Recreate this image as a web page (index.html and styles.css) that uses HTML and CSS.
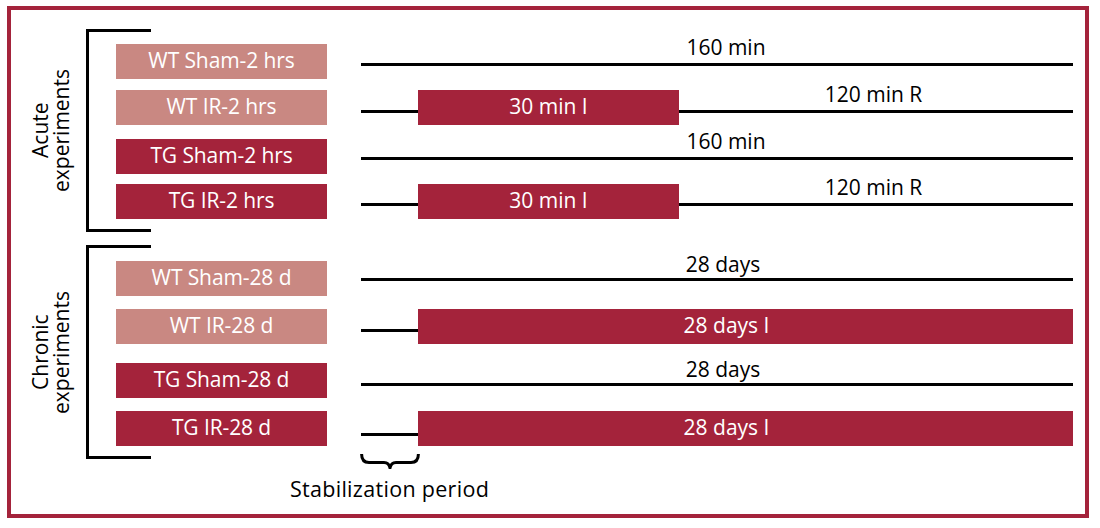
FILE: index.html
```html
<!DOCTYPE html>
<html lang="en">
<head>
<meta charset="utf-8">
<title>Experimental protocol</title>
<link rel="stylesheet" href="styles.css">
</head>
<body>
<div class="frame">
  <section class="group acute">
    <div class="side"><span class="side-text">Acute<br>experiments</span></div>
    <div class="bracket">
      <div class="tick"></div>
      <div class="row">
        <div class="label light">WT Sham-2 hrs</div>
        <div class="track">
          <div class="seg full pad-160"><span>160 min</span></div>
        </div>
      </div>
      <div class="row">
        <div class="label light">WT IR-2 hrs</div>
        <div class="track">
          <div class="seg stab"></div>
          <div class="block short">30 min I</div>
          <div class="seg rest pad-120"><span>120 min R</span></div>
        </div>
      </div>
      <div class="row">
        <div class="label dark">TG Sham-2 hrs</div>
        <div class="track">
          <div class="seg full pad-160"><span>160 min</span></div>
        </div>
      </div>
      <div class="row">
        <div class="label dark">TG IR-2 hrs</div>
        <div class="track">
          <div class="seg stab"></div>
          <div class="block short">30 min I</div>
          <div class="seg rest pad-120"><span>120 min R</span></div>
        </div>
      </div>
      <div class="tick"></div>
    </div>
  </section>

  <section class="group chronic">
    <div class="side"><span class="side-text">Chronic<br>experiments</span></div>
    <div class="bracket">
      <div class="tick"></div>
      <div class="row">
        <div class="label light">WT Sham-28 d</div>
        <div class="track">
          <div class="seg full pad-28"><span>28 days</span></div>
        </div>
      </div>
      <div class="row">
        <div class="label light">WT IR-28 d</div>
        <div class="track">
          <div class="seg stab"></div>
          <div class="block long">28 days I</div>
        </div>
      </div>
      <div class="row">
        <div class="label dark">TG Sham-28 d</div>
        <div class="track">
          <div class="seg full pad-28"><span>28 days</span></div>
        </div>
      </div>
      <div class="row">
        <div class="label dark">TG IR-28 d</div>
        <div class="track">
          <div class="seg stab"></div>
          <div class="block long">28 days I</div>
        </div>
      </div>
      <div class="tick"></div>
    </div>
  </section>

  <div class="footer">
    <div class="stab-note">
      <svg class="brace" viewBox="0 0 60 15" width="60" height="15" aria-hidden="true">
        <path d="M1.6 0 Q1.6 8.5 9 8.5 L24 8.5 Q29 8.5 30 14 Q31 8.5 36 8.5 L51 8.5 Q58.4 8.5 58.4 0" fill="none" stroke="#000" stroke-width="3" stroke-linejoin="round"/>
      </svg>
      <span class="stab-text">Stabilization period</span>
    </div>
  </div>
</div>
</body>
</html>
```

FILE: styles.css
```css
* { box-sizing: border-box; }

html, body {
  margin: 0;
  padding: 0;
  background: #ffffff;
}

body {
  font-family: "Open Sans", "Noto Sans", "Liberation Sans", sans-serif;
  font-size: 21px;
  color: #000;
}

.frame {
  width: 1082px;
  height: 512px;
  margin: 6px 0 0 7px;
  border: 4px solid #a4233b;
  display: flex;
  flex-direction: column;
}

.group {
  display: flex;
}

.acute { margin-top: 19px; }
.chronic { margin-top: 13px; }

.side {
  width: 75px;
  padding-left: 4px;
  display: flex;
  align-items: center;
  justify-content: center;
}

.side-text {
  writing-mode: vertical-rl;
  transform: rotate(180deg);
  text-align: center;
  font-size: 21px;
  line-height: 21px;
  white-space: nowrap;
}

.bracket {
  border-left: 3px solid #000;
  display: flex;
  flex-direction: column;
}

.tick {
  width: 62px;
  height: 3px;
  background: #000;
}

.row {
  display: flex;
  height: 35px;
  padding-left: 27px;
}

/* vertical rhythm of the rows (from the reference) */
.acute .row:nth-child(2) { margin-top: 12px; --ly: 19px; }
.acute .row:nth-child(3) { margin-top: 11px; --ly: 20px; }
.acute .row:nth-child(4) { margin-top: 14px; --ly: 18px; }
.acute .row:nth-child(5) { margin-top: 10px; --ly: 19px; }
.acute .tick:last-child { margin-top: 10px; }

.chronic .row:nth-child(2) { margin-top: 13px; --ly: 17px; }
.chronic .row:nth-child(3) { margin-top: 13px; --ly: 20px; }
.chronic .row:nth-child(4) { margin-top: 19px; --ly: 20px; }
.chronic .row:nth-child(5) { margin-top: 13px; --ly: 22px; }
.chronic .tick:last-child { margin-top: 10px; }

.label {
  width: 211px;
  height: 35px;
  display: flex;
  align-items: center;
  justify-content: center;
  padding-bottom: 3px;
  color: #ffffff;
  letter-spacing: -0.1px;
  white-space: nowrap;
}

.light { background: #c98882; }
.dark { background: #a4233b; }

.track {
  display: flex;
  align-items: flex-start;
  width: 712px;
  height: 35px;
  margin-left: 34px;
}

.seg {
  flex: none;
  height: calc(var(--ly) + 3px);
  border-bottom: 3px solid #000;
  display: flex;
  flex-direction: column;
  justify-content: flex-end;
  align-items: center;
}

.seg span {
  line-height: 20px;
  white-space: nowrap;
  padding-bottom: 6px;
}

.chronic .seg span { padding-bottom: 4px; }

.full { width: 712px; }
.stab { width: 57px; }
.rest { width: 394px; }

.pad-160 { padding-left: 18px; }
.pad-120 { padding-right: 5px; }
.pad-28 { padding-left: 12px; }

.block {
  flex: none;
  height: 35px;
  background: #a4233b;
  color: #ffffff;
  display: flex;
  align-items: center;
  justify-content: center;
  padding-bottom: 3px;
  white-space: nowrap;
}

.short { width: 261px; }
.long { width: 655px; padding-right: 38px; }

.footer {
  padding-left: 350px;
  margin-top: -5px;
}

.stab-note {
  width: 57px;
  display: flex;
  flex-direction: column;
  align-items: center;
}

.brace {
  display: block;
}

.stab-text {
  margin-top: 8px;
  font-size: 21.5px;
  line-height: 24px;
  letter-spacing: 0.3px;
  white-space: nowrap;
}
```
